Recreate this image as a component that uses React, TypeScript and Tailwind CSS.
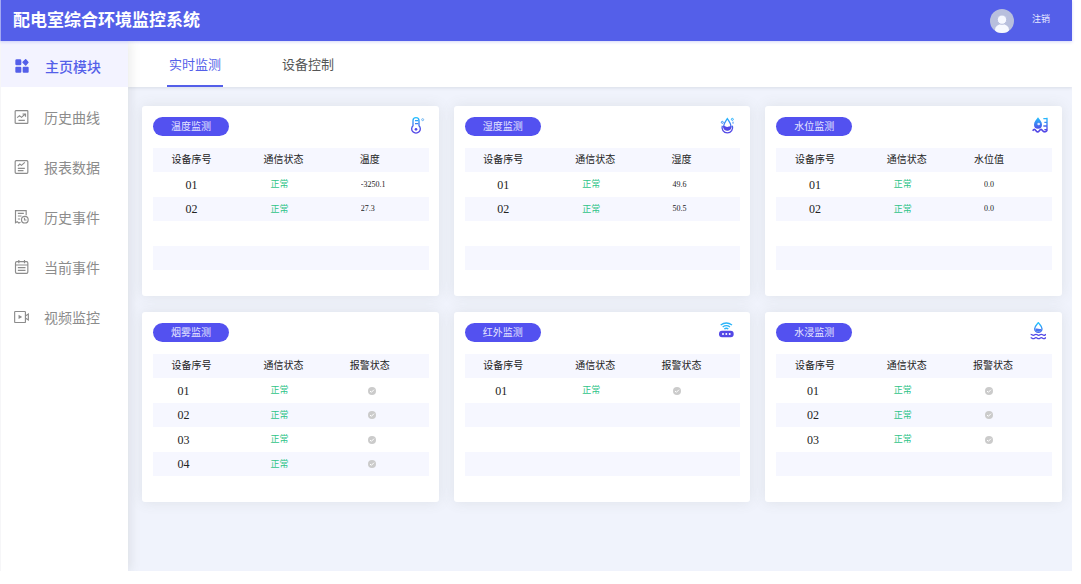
import React, { useState } from 'react';
import clsx from 'clsx';

type IconProps = { className?: string };

/* ---------- Sidebar icons ---------- */

const GridIcon: React.FC<IconProps> = ({ className }) => (
    <svg viewBox="0 0 42 42" className={className} fill="currentColor" aria-hidden="true">
        <rect x="1" y="1" width="18" height="18" rx="4" />
        <path d="M32 2l7 8-7 8-8-8z" stroke="currentColor" strokeWidth="4" strokeLinejoin="round" />
        <rect x="1" y="23" width="18" height="18" rx="3" />
        <rect x="23" y="23" width="18" height="18" rx="3" />
    </svg>
);

const CurveIcon: React.FC<IconProps> = ({ className }) => (
    <svg viewBox="0 0 42 42" className={className} fill="none" stroke="currentColor" strokeWidth="3.500" aria-hidden="true">
        <rect x="2" y="2" width="38" height="38" rx="2" />
        <path d="M8 23l7-6 6 5 11-10M24 12h9v8M12 31h19" />
    </svg>
);

const ReportIcon: React.FC<IconProps> = ({ className }) => (
    <svg viewBox="0 0 42 42" className={className} fill="none" stroke="currentColor" strokeWidth="3.500" aria-hidden="true">
        <rect x="2" y="2" width="38" height="38" rx="3" />
        <path d="M10 18l6-6 5 4 10-9M10 25h21M10 32h17" />
    </svg>
);

const HistoryIcon: React.FC<IconProps> = ({ className }) => (
    <svg viewBox="0 0 42 42" className={className} fill="none" stroke="currentColor" strokeWidth="3.500" aria-hidden="true">
        <path d="M35 16V2H3v36l5-3 5 4 5-2M10 10h18M10 18h11M10 27h7" />
        <circle cx="31" cy="29" r="10" />
        <path d="M30 23v7h6" />
    </svg>
);

const CalendarIcon: React.FC<IconProps> = ({ className }) => (
    <svg viewBox="0 0 42 42" className={className} fill="none" stroke="currentColor" strokeWidth="3.500" aria-hidden="true">
        <rect x="3" y="5" width="37" height="35" rx="4" />
        <path d="M13 0v10M30 0v10M3 15h37M10 23h23M10 31h23" />
    </svg>
);

const VideoIcon: React.FC<IconProps> = ({ className }) => (
    <svg viewBox="0 0 46 42" className={className} fill="none" stroke="currentColor" strokeWidth="3.500" aria-hidden="true">
        <rect x="2" y="4" width="33" height="34" rx="2" />
        <path d="M14 14v13l11-6z" fill="currentColor" stroke="none" />
        <path d="M36 17l8-5v18l-8-5" />
    </svg>
);

/* ---------- Panel icons ---------- */

const Tint: React.FC<{ id: string }> = ({ id }) => (
    <defs>
        <linearGradient id={id} x1="0" y1="4" x2="0" y2="52" gradientUnits="userSpaceOnUse">
            <stop offset="0" stopColor="#22c3ff" />
            <stop offset="0.75" stopColor="#5348e6" />
        </linearGradient>
    </defs>
);

const ThermometerIcon: React.FC<IconProps> = ({ className }) => (
    <svg viewBox="0 0 60 60" className={className} fill="none" stroke="url(#thermo)" strokeWidth="4" aria-hidden="true">
        <Tint id="thermo" />
        <path d="M21 29V14a9 9 0 0 1 18 0v15a13 13 0 1 1-18 0z" />
        <path d="M27 14h10M27 23h10" strokeWidth="4" />
        <circle cx="30" cy="40" r="4" fill="#5348e6" stroke="none" />
        <circle cx="50" cy="11" r="3" stroke="#6cb6f5" strokeWidth="3" />
    </svg>
);

const HumidityIcon: React.FC<IconProps> = ({ className }) => (
    <svg viewBox="0 0 60 60" className={className} fill="none" stroke="url(#humid)" strokeWidth="4" aria-hidden="true">
        <Tint id="humid" />
        <path d="M31 8c5 8 11 14 11 23a11 11 0 0 1-22 0c0-9 6-15 11-23z" />
        <path d="M16 29a16 16 0 1 0 30 0" />
        <path d="M19 31c5-3 8 3 12 2s7-3 12-2a12 12 0 0 1-24 0z" fill="#5348e6" stroke="none" />
        <circle cx="16" cy="19" r="3" strokeWidth="3" />
        <circle cx="46" cy="10" r="3" strokeWidth="3" />
        <path d="M48 17v6" strokeWidth="3" />
    </svg>
);

const WaterLevelIcon: React.FC<IconProps> = ({ className }) => (
    <svg viewBox="0 0 60 60" className={className} fill="none" stroke="url(#level)" strokeWidth="5" aria-hidden="true">
        <Tint id="level" />
        <path d="M27 4c5 8 12 13 12 22a12 12 0 0 1-24 0c0-9 7-14 12-22z" fill="url(#level)" stroke="none" />
        <circle cx="29" cy="24" r="4" fill="#dfe6ff" stroke="none" />
        <path d="M54 5v40M43 8h11M46 19h8M43 30h11M46 41h8" strokeWidth="4" />
        <path d="M11 44c4-5 6-5 10 0s6 5 10 0 6-5 10 0 6 4 13 0" stroke="#5348e6" />
    </svg>
);

const InfraredIcon: React.FC<IconProps> = ({ className }) => (
    <svg viewBox="0 0 60 60" className={className} fill="none" stroke="#2ab4f8" strokeWidth="4" aria-hidden="true">
        <path d="M11 9c10-7 24-7 34 0M17 15c7-5 15-5 22 0M22 21c4-3 8-3 12 0" />
        <rect x="6" y="26" width="44" height="20" rx="9" fill="#5348e6" stroke="none" />
        <g fill="#fff" stroke="none">
            <circle cx="18" cy="36" r="3" />
            <circle cx="28" cy="36" r="3" />
            <circle cx="38" cy="36" r="3" />
        </g>
    </svg>
);

const ImmersionIcon: React.FC<IconProps> = ({ className }) => (
    <svg viewBox="0 0 60 60" className={className} fill="none" stroke="url(#immersion)" strokeWidth="4" aria-hidden="true">
        <Tint id="immersion" />
        <path d="M28 2c5 7 11 11 11 18a11 11 0 0 1-22 0c0-7 6-11 11-18z" />
        <path d="M19 20c6-3 12 3 18 0a9 9 0 0 1-18 0z" fill="#4b74f0" stroke="none" />
        <path
            d="M5 37c4 0 4 3 8 3s4-3 8-3 4 3 8 3 4-3 8-3 4 3 8 3 4-3 6-3M5 47c4 0 4 3 8 3s4-3 8-3 4 3 8 3 4-3 8-3 4 3 8 3 4-3 6-3"
            stroke="#5348e6"
        />
    </svg>
);

const AlarmOffIcon: React.FC = () => (
    <svg viewBox="0 0 24 24" className="inline-block size-2 align-middle" role="img" aria-label="无报警">
        <circle cx="12" cy="12" r="12" fill="#cbcbcb" />
        <path d="M6 12l4 4 8-8" fill="none" stroke="#fff" strokeWidth="3" />
    </svg>
);

/* ---------- Data ---------- */

const navItems: { label: string; icon: React.ElementType }[] = [
    { label: '历史曲线', icon: CurveIcon },
    { label: '报表数据', icon: ReportIcon },
    { label: '历史事件', icon: HistoryIcon },
    { label: '当前事件', icon: CalendarIcon },
    { label: '视频监控', icon: VideoIcon },
];

const tabs = ['实时监测', '设备控制'];

interface Panel {
    title: string;
    column: string;
    icon?: React.ElementType;
    // null stands for a device that only reports an alarm flag
    rows: { id: string; value: string | null }[];
    idClass: string;
    headClass: string;
    valueClass: string;
}

const panels: Panel[] = [
    {
        title: '温度监测',
        column: '温度',
        icon: ThermometerIcon,
        rows: [{ id: '01', value: '-3250.1' }, { id: '02', value: '27.3' }],
        idClass: '',
        headClass: 'pr-6',
        valueClass: 'pr-[18px]',
    },
    {
        title: '湿度监测',
        column: '湿度',
        icon: HumidityIcon,
        rows: [{ id: '01', value: '49.6' }, { id: '02', value: '50.5' }],
        idClass: '',
        headClass: 'pr-6',
        valueClass: 'pr-[18px]',
    },
    {
        title: '水位监测',
        column: '水位值',
        icon: WaterLevelIcon,
        rows: [{ id: '01', value: '0.0' }, { id: '02', value: '0.0' }],
        idClass: '',
        headClass: 'pr-8',
        valueClass: 'pr-[18px]',
    },
    {
        title: '烟雾监测',
        column: '报警状态',
        rows: ['01', '02', '03', '04'].map((id) => ({ id, value: null })),
        idClass: 'pr-4',
        headClass: 'pr-6',
        valueClass: 'pr-5',
    },
    {
        title: '红外监测',
        column: '报警状态',
        icon: InfraredIcon,
        rows: [{ id: '01', value: null }],
        idClass: 'pr-1',
        headClass: 'pr-6',
        valueClass: 'pr-8',
    },
    {
        title: '水浸监测',
        column: '报警状态',
        icon: ImmersionIcon,
        rows: ['01', '02', '03'].map((id) => ({ id, value: null })),
        idClass: 'pr-1',
        headClass: 'pr-6',
        valueClass: 'pr-8',
    },
];

const ROWS_PER_PANEL = 4;

const PanelCard: React.FC<{ panel: Panel }> = ({ panel }) => {
    const blanks = Array.from({ length: ROWS_PER_PANEL - panel.rows.length });

    return (
        <section className="rounded-[3px] bg-white pt-[10px] pr-[10px] pb-[26px] pl-[11px] shadow-[0_0_14px_rgba(100,105,90,0.12)]">
            <div className="flex h-5 items-center justify-between pr-[3px]">
                <h2 className="flex h-[19px] w-[76px] items-center justify-center rounded-full bg-[#5351f0] text-[10px] leading-none text-[#e4e4ff]">
                    {panel.title}
                </h2>
                {panel.icon && <panel.icon className="size-5" />}
            </div>

            <table className="mt-3 w-full table-fixed border-collapse text-center">
                <thead>
                    <tr className="h-6 bg-[#f6f7ff] text-[10px] leading-none text-[#222]">
                        <th className="w-[28%] p-0 pb-0.5 font-normal">设备序号</th>
                        <th className="w-[38%] p-0 pb-0.5 pl-0.5 font-normal">通信状态</th>
                        <th className={clsx('p-0 pb-0.5 font-normal', panel.headClass)}>{panel.column}</th>
                    </tr>
                </thead>
                <tbody>
                    {panel.rows.map((row) => (
                        <tr key={row.id} className="h-6 odd:h-[25px] even:bg-[#f6f7ff]">
                            <td className={clsx("p-0 font-['Liberation_Serif',serif] text-xs leading-none text-[#222]", panel.idClass)}>
                                {row.id}
                            </td>
                            <td className="p-0 pr-1.5 pb-0.5 text-[9px] leading-none text-[#2fc488]">正常</td>
                            <td className={clsx("p-0 font-['Liberation_Serif',serif] text-[8px] leading-none text-[#222]", panel.valueClass)}>
                                {row.value === null ? (
                                    <AlarmOffIcon />
                                ) : (
                                    <span className="mx-auto block w-6 overflow-hidden text-left">{row.value}</span>
                                )}
                            </td>
                        </tr>
                    ))}
                    {blanks.map((_, i) => (
                        <tr key={i} className="h-6 odd:h-[25px] even:bg-[#f6f7ff]">
                            <td colSpan={3} className="p-0" />
                        </tr>
                    ))}
                </tbody>
            </table>
        </section>
    );
};

const App: React.FC = () => {
    const [activeTab, setActiveTab] = useState(tabs[0]);

    return (
        <div className="flex min-h-screen flex-col bg-white pr-[9px] pb-[13px] font-['Noto_Sans_CJK_SC',sans-serif]">
            <header className="z-20 flex h-[41px] items-center justify-between border-l border-[#a3a9f3] bg-[#545fe9] pr-[22px] pl-3 text-white shadow-[0_1px_3px_rgba(84,95,233,0.25)]">
                <h1 className="pb-1 text-[17px] leading-none font-bold">配电室综合环境监控系统</h1>
                <div className="flex items-center gap-[18px]">
                    <svg viewBox="0 0 72 72" className="size-6" role="img" aria-label="用户头像">
                        <clipPath id="avatar">
                            <circle cx="36" cy="36" r="36" />
                        </clipPath>
                        <g clipPath="url(#avatar)">
                            <rect width="72" height="72" fill="#b8bfdd" />
                            <ellipse cx="36" cy="62" rx="21" ry="17" fill="#f6f8ff" />
                            <circle cx="36" cy="32" r="14" fill="#f6f8ff" stroke="#b8bfdd" strokeWidth="3" />
                        </g>
                    </svg>
                    <button type="button" className="pb-1 text-[9px] leading-none text-[#e6e8ff]">注销</button>
                </div>
            </header>

            <div className="flex flex-1 overflow-hidden">
                <aside className="z-10 w-32 shrink-0 border-l border-[#f6f6f8] bg-white shadow-[2px_0_10px_rgba(100,105,90,0.14)]">
                    <nav>
                        <a href="#home" className="flex h-[46px] items-center bg-[#f3f3ff] pt-1 pl-[14px] text-[#545fe9]">
                            <GridIcon className="mr-4 size-[14px]" />
                            <span className="text-sm leading-none font-medium">主页模块</span>
                        </a>
                        <div className="pt-[5px]">
                            {navItems.map((item) => (
                                <a
                                    key={item.label}
                                    href={`#${item.label}`}
                                    className="flex h-[50px] items-center pl-[13px] text-[#8c8c8c]"
                                >
                                    <item.icon className="mr-[15px] h-[14px] w-[15px]" />
                                    <span className="text-sm leading-none">{item.label}</span>
                                </a>
                            ))}
                        </div>
                    </nav>
                </aside>

                <main className="flex min-w-0 flex-1 flex-col bg-[#f0f3fc]">
                    <div role="tablist" className="flex h-[46px] gap-[57px] bg-white pl-[39px] shadow-[0_1px_3px_rgba(90,100,110,0.15)]">
                        {tabs.map((tab) => (
                            <button
                                key={tab}
                                type="button"
                                role="tab"
                                aria-selected={activeTab === tab}
                                onClick={() => setActiveTab(tab)}
                                className={clsx(
                                    'border-b-2 px-[2px] pt-px text-[13px] leading-none',
                                    activeTab === tab ? 'border-[#545fe9] text-[#545fe9]' : 'border-transparent text-[#555]'
                                )}
                            >
                                {tab}
                            </button>
                        ))}
                    </div>

                    <div className="grid grid-cols-3 gap-x-[15px] gap-y-4 pt-[19px] pr-[10px] pb-6 pl-[14px]">
                        {panels.map((panel) => (
                            <PanelCard key={panel.title} panel={panel} />
                        ))}
                    </div>
                </main>
            </div>
        </div>
    );
};

export default App;
